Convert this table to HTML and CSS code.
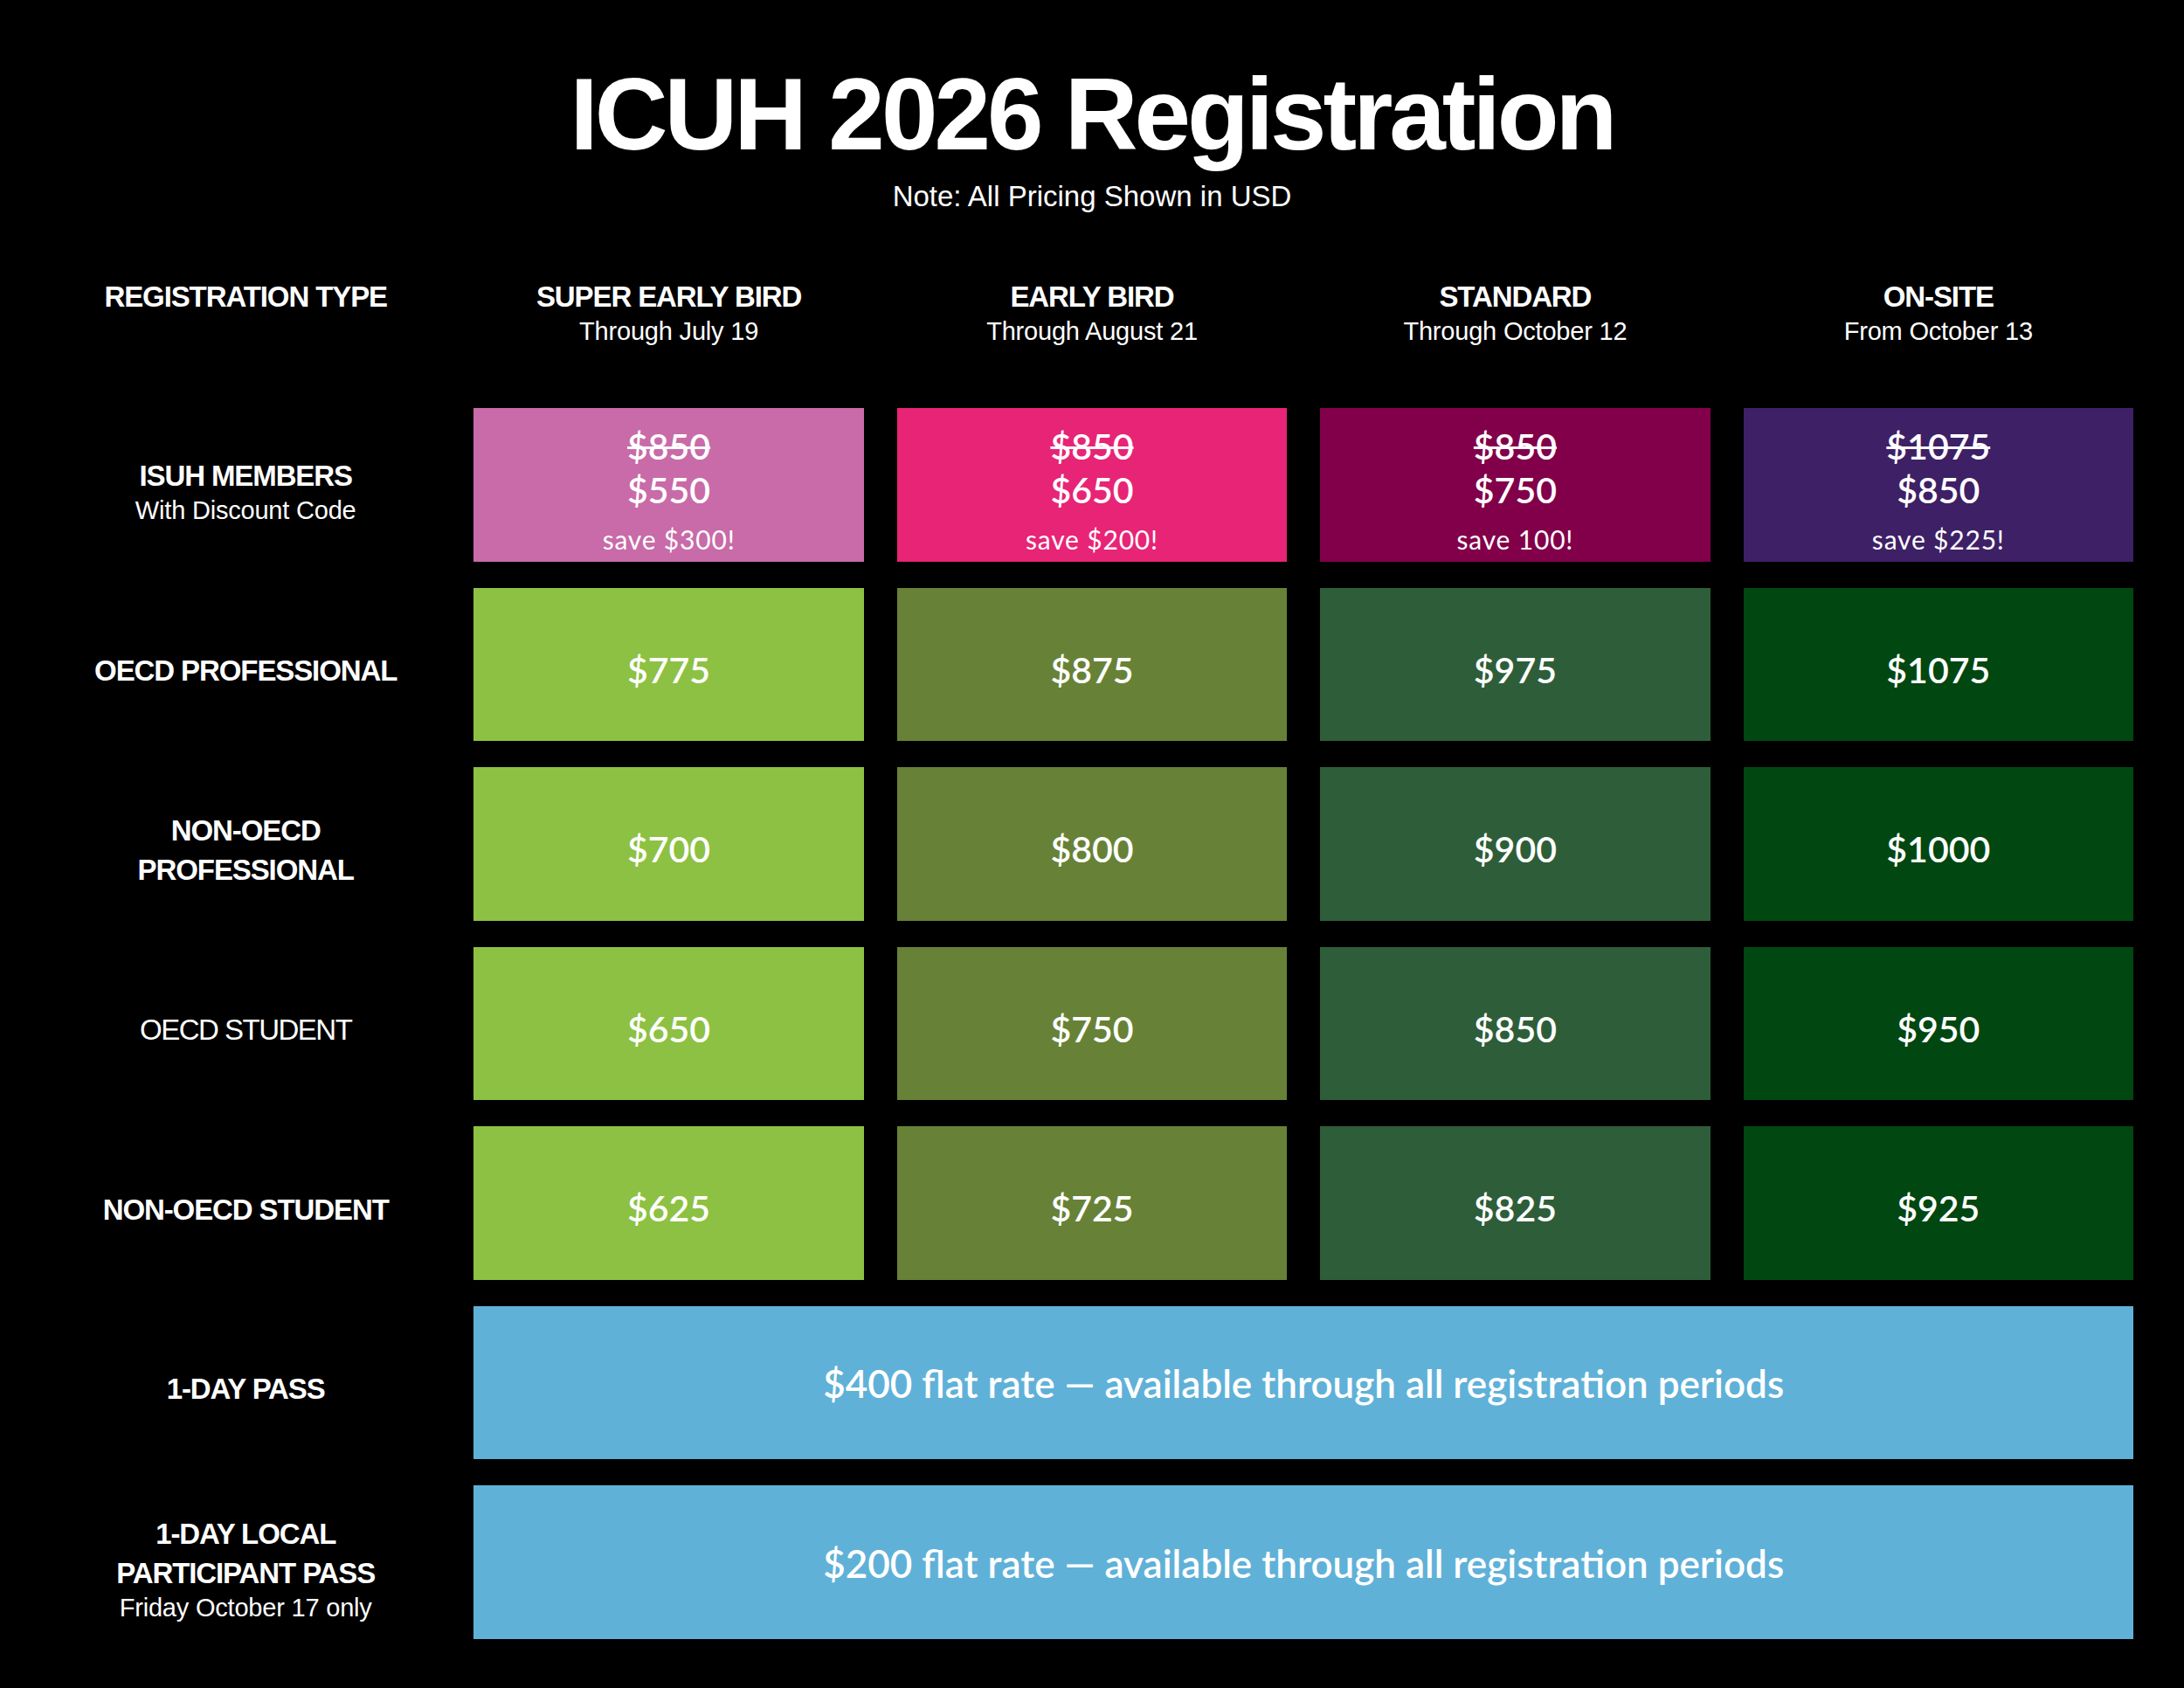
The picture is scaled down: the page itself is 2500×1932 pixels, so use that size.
FILE: index.html
```html
<!DOCTYPE html>
<html lang="en">
<head>
<meta charset="utf-8">
<title>ICUH 2026 Registration</title>
<link rel="stylesheet" href="styles.css">
</head>
<body>
<main class="page">
  <h1 class="title">ICUH 2026 Registration</h1>
  <p class="note">Note: All Pricing Shown in USD</p>

  <section class="grid">
    <div class="head label-col"><div class="lbl">REGISTRATION TYPE</div></div>
    <div class="head"><div class="lbl">SUPER EARLY BIRD</div><div class="sub">Through July 19</div></div>
    <div class="head"><div class="lbl">EARLY BIRD</div><div class="sub">Through August 21</div></div>
    <div class="head"><div class="lbl">STANDARD</div><div class="sub">Through October 12</div></div>
    <div class="head"><div class="lbl">ON-SITE</div><div class="sub">From October 13</div></div>

    <div class="rowlabel"><div class="lbl">ISUH MEMBERS</div><div class="sub">With Discount Code</div></div>
    <div class="cell member m1"><div class="old">$850</div><div class="price">$550</div><div class="save">save $300!</div></div>
    <div class="cell member m2"><div class="old">$850</div><div class="price">$650</div><div class="save">save $200!</div></div>
    <div class="cell member m3"><div class="old">$850</div><div class="price">$750</div><div class="save">save 100!</div></div>
    <div class="cell member m4"><div class="old">$1075</div><div class="price">$850</div><div class="save">save $225!</div></div>

    <div class="rowlabel"><div class="lbl">OECD PROFESSIONAL</div></div>
    <div class="cell g1"><div class="price">$775</div></div>
    <div class="cell g2"><div class="price">$875</div></div>
    <div class="cell g3"><div class="price">$975</div></div>
    <div class="cell g4"><div class="price">$1075</div></div>

    <div class="rowlabel"><div class="lbl">NON-OECD<br>PROFESSIONAL</div></div>
    <div class="cell g1"><div class="price">$700</div></div>
    <div class="cell g2"><div class="price">$800</div></div>
    <div class="cell g3"><div class="price">$900</div></div>
    <div class="cell g4"><div class="price">$1000</div></div>

    <div class="rowlabel"><div class="lbl regular">OECD STUDENT</div></div>
    <div class="cell g1"><div class="price">$650</div></div>
    <div class="cell g2"><div class="price">$750</div></div>
    <div class="cell g3"><div class="price">$850</div></div>
    <div class="cell g4"><div class="price">$950</div></div>

    <div class="rowlabel"><div class="lbl">NON-OECD STUDENT</div></div>
    <div class="cell g1"><div class="price">$625</div></div>
    <div class="cell g2"><div class="price">$725</div></div>
    <div class="cell g3"><div class="price">$825</div></div>
    <div class="cell g4"><div class="price">$925</div></div>

    <div class="rowlabel"><div class="lbl">1-DAY PASS</div></div>
    <div class="cell flat"><div class="flat-text">$400 flat rate — available through all registration periods</div></div>

    <div class="rowlabel"><div class="lbl">1-DAY LOCAL<br>PARTICIPANT PASS</div><div class="sub">Friday October 17 only</div></div>
    <div class="cell flat"><div class="flat-text">$200 flat rate — available through all registration periods</div></div>
  </section>
</main>
</body>
</html>
```

FILE: styles.css
```css
html, body {
  margin: 0;
  padding: 0;
  background: #000;
}

body {
  width: 2500px;
  height: 1932px;
  color: #fff;
  font-family: "Liberation Sans", Arial, sans-serif;
  overflow: hidden;
}

.page {
  padding-top: 73px;
}

.title {
  margin: 0;
  font-size: 116px;
  line-height: 116px;
  font-weight: 700;
  letter-spacing: -4px;
  text-align: center;
}

.note {
  margin: 19px 0 0;
  font-size: 33px;
  line-height: 33px;
  font-weight: 400;
  text-align: center;
}

.grid {
  margin-top: 76px;
  padding: 0 58px;
  display: grid;
  grid-template-columns: repeat(5, 1fr);
  grid-template-rows: auto repeat(7, 175.5px);
  column-gap: 38px;
  row-gap: 30px;
}

.head {
  margin-bottom: 40px;
  text-align: center;
}

.lbl {
  font-size: 33px;
  line-height: 45px;
  font-weight: 700;
  letter-spacing: -1.1px;
}

.lbl.regular {
  font-weight: 400;
  letter-spacing: -1.5px;
}

.sub {
  font-size: 29px;
  line-height: 35px;
  font-weight: 400;
  letter-spacing: -0.2px;
}

.rowlabel {
  display: flex;
  flex-direction: column;
  justify-content: center;
  align-items: center;
  text-align: center;
  padding-top: 15px;
}

.cell {
  display: flex;
  flex-direction: column;
  justify-content: center;
  align-items: center;
  padding-top: 13px;
  box-sizing: border-box;
  font-family: "Lato", "Noto Sans", sans-serif;
  color: #fff;
}

.price,
.old {
  font-size: 41px;
  line-height: 50px;
  font-weight: 600;
}

.old {
  text-decoration: line-through;
  text-decoration-thickness: 3px;
}

.save {
  margin-top: 13px;
  font-size: 30px;
  line-height: 36px;
  font-weight: 400;
  letter-spacing: 0.8px;
}

.member {
  padding-top: 12px;
}

.m1 { background: #c86ba8; }
.m2 { background: #e72476; }
.m3 { background: #82004a; }
.m4 { background: #3e2066; }

.g1 { background: #8dc143; }
.g2 { background: #678237; }
.g3 { background: #2e5e39; }
.g4 { background: #014711; }

.flat {
  grid-column: span 4;
  background: #60b1d8;
  padding-top: 2px;
}

.flat-text {
  font-size: 44px;
  line-height: 52px;
  font-weight: 600;
  letter-spacing: 0;
}
```
